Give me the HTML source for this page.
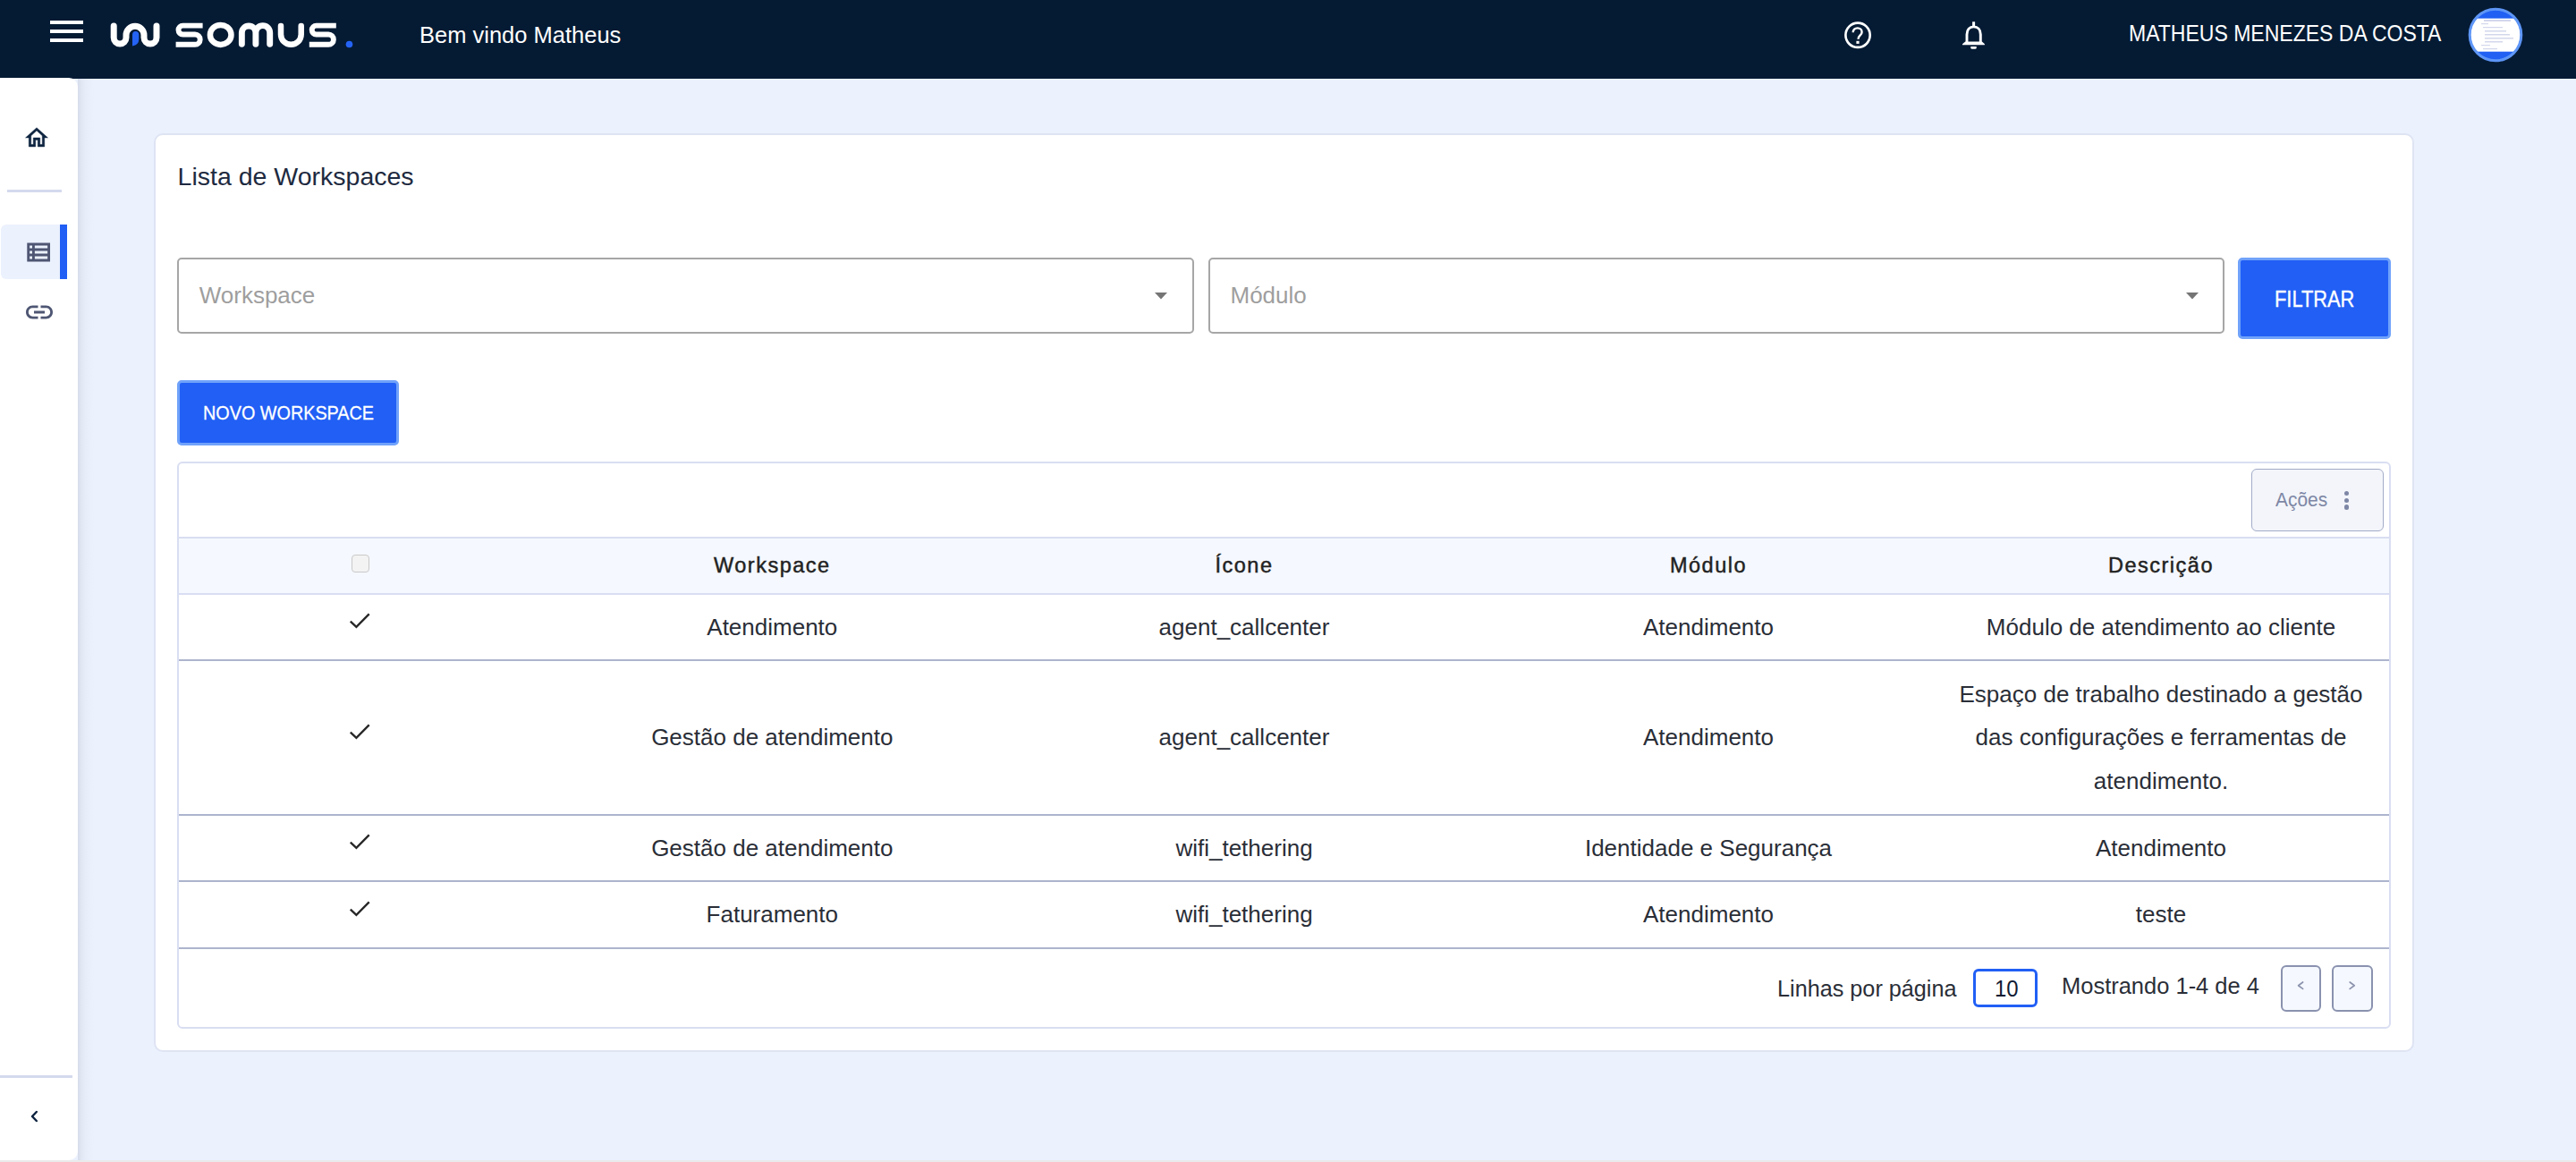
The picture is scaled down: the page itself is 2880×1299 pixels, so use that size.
<!DOCTYPE html>
<html><head><meta charset="utf-8"><title>Lista de Workspaces</title>
<style>
html,body{margin:0;padding:0;width:2880px;height:1299px;overflow:hidden;background:#ebf1fd;font-family:"Liberation Sans", sans-serif;}
</style></head><body>
<div style="position:absolute;left:0px;top:0px;width:2880px;height:88px;background:#051b34;"></div>
<div style="position:absolute;left:56px;top:23px;width:37px;height:4px;background:#fff;"></div>
<div style="position:absolute;left:56px;top:33px;width:37px;height:4px;background:#fff;"></div>
<div style="position:absolute;left:56px;top:43px;width:37px;height:4px;background:#fff;"></div>
<svg style="position:absolute;left:0;top:0" width="420" height="88" viewBox="0 0 420 88">
<g fill="none" stroke="#fff" stroke-width="7" stroke-linecap="round" stroke-linejoin="round">
<path d="M127.2 29 V42.1 A6.9 6.9 0 0 0 141 42.1 V39.3 A10 10 0 0 1 161 39.3 V42.1 A7 7 0 0 0 175 42.1 V29"/>
<path d="M270.35 49.25 V36.5 A7.78 7.78 0 0 1 285.9 36.5 V49.25 M285.9 36.5 A7.9 7.9 0 0 1 301.7 36.5 V49.25" stroke-width="6.9"/>
<path d="M314 28.9 V38.45 A11.35 11.35 0 0 0 336.7 38.45 V28.9" stroke-width="6.5"/>
</g>
<g fill="none" stroke="#fff" stroke-width="5.9" stroke-linecap="butt" stroke-linejoin="round">
<path d="M226.6 28.6 H204.45 A4.95 4.95 0 0 0 204.45 38.5 H218.05 A5.65 5.65 0 0 1 218.05 49.8 H196.6"/>
<path d="M375.8 28.6 H353.65 A4.95 4.95 0 0 0 353.65 38.5 H367.25 A5.65 5.65 0 0 1 367.25 49.8 H345.8"/>
</g>
<ellipse cx="246.7" cy="38.95" rx="11.78" ry="10.95" fill="none" stroke="#fff" stroke-width="6.5"/>
<path d="M148 51.5 L148 39 Q148 35 151.6 35 Q155.3 35 155.3 39 V44 Q155.3 50 148 51.5 Z" fill="#2563f5"/>
<circle cx="390.5" cy="49.5" r="3.8" fill="#2563f5"/>
</svg>
<div style="position:absolute;left:469px;top:26.81px;font-size:25.5px;line-height:25.5px;color:#fff;font-weight:400;white-space:nowrap;">Bem vindo Matheus</div>
<svg style="position:absolute;left:2050px;top:15px" width="180" height="50" viewBox="2050 15 180 50"><circle cx="2077.05" cy="39.3" r="13.65" fill="none" stroke="#fff" stroke-width="2.65"/><path d="M2071.7 36.3 C2071.7 33.3 2073.9 31.4 2076.7 31.4 C2079.6 31.4 2081.6 33.3 2081.6 35.9 C2081.6 39.2 2077.5 39.6 2077.5 43.7" fill="none" stroke="#fff" stroke-width="2.4"/><rect x="2075.4" y="45.8" width="3.2" height="3.1" fill="#fff"/><path d="M2199 47 V38.5 C2199 33 2202 29.9 2206.6 29.9 C2211.2 29.9 2214.3 33 2214.3 38.5 V47" fill="none" stroke="#fff" stroke-width="2.9"/><path d="M2194 50.2 H2218.9 V49.3 L2215.9 46.6 H2197.2 L2194 49.3 Z" fill="#fff"/><rect x="2205.1" y="24.3" width="3" height="5" fill="#fff"/><path d="M2203.3 51.9 H2209.7 V53.2 Q2209.7 54.7 2208.2 54.7 H2204.8 Q2203.3 54.7 2203.3 53.2 Z" fill="#fff"/></svg>
<div style="position:absolute;left:2380px;top:23.69px;font-size:26px;line-height:26px;color:#fff;font-weight:400;white-space:nowrap;transform:scaleX(0.885);transform-origin:0 0;">MATHEUS MENEZES DA COSTA</div>
<svg style="position:absolute;left:2758px;top:7.4px" width="64" height="64" viewBox="0 0 64 64">
<defs><clipPath id="av"><circle cx="32" cy="32" r="28"/></clipPath></defs>
<g clip-path="url(#av)">
<rect x="0" y="0" width="64" height="64" fill="#fff"/>
<rect x="0" y="0" width="64" height="13.6" fill="#2160f3"/>
<rect x="0" y="50.7" width="64" height="14" fill="#2160f3"/>
<g fill="#d3d7ec">
<rect x="19" y="15" width="30" height="2"/><rect x="16" y="19" width="8" height="1.2"/><rect x="18" y="23" width="22" height="1.2"/>
<rect x="20" y="27" width="24" height="1.5"/><rect x="20" y="31" width="28" height="1.5"/><rect x="20" y="35" width="32" height="1.5"/>
<rect x="20" y="39" width="20" height="1.5"/><rect x="16" y="43" width="10" height="1.2"/><rect x="18" y="47" width="16" height="1.2"/>
</g>
</g>
<circle cx="32" cy="32" r="28.8" fill="none" stroke="#5e96f7" stroke-width="3"/>
</svg>
<div style="position:absolute;left:87px;top:88px;width:18px;height:1209px;background:linear-gradient(90deg,#d6dcea 0px,#e1e7f3 4px,#e7edf9 9px,#ebf1fd 18px);"></div>
<div style="position:absolute;left:0px;top:87px;width:87px;height:1210px;background:#fff;border-radius:0 10px 10px 0;"></div>
<svg style="position:absolute;left:26.4px;top:139px" width="30" height="30" viewBox="0 0 24 24"><path fill="#0e2440" stroke="#0e2440" stroke-width="0.35" d="M12 5.69l5 4.5V18h-2v-6H9v6H7v-7.81l5-4.5M12 3L2 12h3v8h6v-6h2v6h6v-8h3L12 3z"/></svg>
<div style="position:absolute;left:8px;top:212px;width:61px;height:3px;background:#d4daee;"></div>
<div style="position:absolute;left:1px;top:251px;width:66px;height:61px;background:#ebf1fd;border-radius:6px 0 0 6px;"></div>
<div style="position:absolute;left:67px;top:251px;width:8px;height:61px;background:#215ff5;"></div>
<svg style="position:absolute;left:26.2px;top:263.6px" width="34.3" height="36" viewBox="0 0 24 24" preserveAspectRatio="none"><path fill="#4e5673" d="M3 5v14h18V5H3zm4 2v2H5V7h2zm-2 6v-2h2v2H5zm0 2h2v2H5v-2zm14 2H9v-2h10v2zm0-4H9v-2h10v2zm0-4H9V7h10v2z"/></svg>
<svg style="position:absolute;left:26.1px;top:330.8px" width="36" height="36" viewBox="0 0 24 24"><path fill="#4e5673" d="M3.9 12c0-1.71 1.39-3.1 3.1-3.1h4V7H7c-2.76 0-5 2.24-5 5s2.24 5 5 5h4v-1.9H7c-1.71 0-3.1-1.39-3.1-3.1zM8 13h8v-2H8v2zm9-6h-4v1.9h4c1.71 0 3.1 1.39 3.1 3.1s-1.39 3.1-3.1 3.1h-4V17h4c2.76 0 5-2.24 5-5s-2.24-5-5-5z"/></svg>
<div style="position:absolute;left:0px;top:1202px;width:81px;height:3px;background:#d4daee;"></div>
<svg style="position:absolute;left:0;top:1230px" width="80" height="40" viewBox="0 1230 80 40"><polyline points="40.8,1243 36,1248 40.8,1253" fill="none" stroke="#0e2440" stroke-width="2.5" stroke-linecap="round" stroke-linejoin="round"/></svg>
<div style="position:absolute;left:0px;top:1297px;width:2880px;height:2px;background:#eaeaea;"></div>
<div style="position:absolute;left:172px;top:149px;width:2527px;height:1027px;background:#fff;border:2px solid #dfe4f3;border-radius:10px;box-sizing:border-box;"></div>
<div style="position:absolute;left:198.6px;top:182.87px;font-size:28.5px;line-height:28.5px;color:#1e2a40;font-weight:400;white-space:nowrap;">Lista de Workspaces</div>
<div style="position:absolute;left:198px;top:288px;width:1137px;height:85px;border:2px solid #a6a6a6;border-radius:5px;box-sizing:border-box;background:#fff;"></div>
<div style="position:absolute;left:1351px;top:288px;width:1136px;height:85px;border:2px solid #a6a6a6;border-radius:5px;box-sizing:border-box;background:#fff;"></div>
<div style="position:absolute;left:222.7px;top:317.39px;font-size:26px;line-height:26px;color:#9e9e9e;font-weight:400;white-space:nowrap;">Workspace</div>
<div style="position:absolute;left:1375.5px;top:317.39px;font-size:26px;line-height:26px;color:#9e9e9e;font-weight:400;white-space:nowrap;">Módulo</div>
<svg style="position:absolute;left:1291px;top:327px" width="14" height="8" viewBox="0 0 14 8"><path d="M0 0H14L7 7.5Z" fill="#757575"/></svg>
<svg style="position:absolute;left:2444px;top:327px" width="14" height="8" viewBox="0 0 14 8"><path d="M0 0H14L7 7.5Z" fill="#757575"/></svg>
<div style="position:absolute;left:2502px;top:288px;width:171px;height:91px;background:#215ff5;border:3px solid #70a2fa;border-radius:5px;box-sizing:border-box;"></div>
<div style="position:absolute;left:2543.4px;top:321.29px;font-size:26px;line-height:26px;color:#fff;font-weight:400;white-space:nowrap;transform:scaleX(0.84);transform-origin:0 0;-webkit-text-stroke:0.35px #fff;">FILTRAR</div>
<div style="position:absolute;left:198px;top:425px;width:248px;height:73px;background:#215ff5;border:3px solid #70a2fa;border-radius:5px;box-sizing:border-box;"></div>
<div style="position:absolute;left:226.7px;top:450.88px;font-size:22px;line-height:22px;color:#fff;font-weight:400;white-space:nowrap;transform:scaleX(0.9);transform-origin:0 0;-webkit-text-stroke:0.3px #fff;">NOVO WORKSPACE</div>
<div style="position:absolute;left:198px;top:516px;width:2475px;height:634px;border:2px solid #d9def2;border-radius:6px;box-sizing:border-box;"></div>
<div style="position:absolute;left:2517px;top:524px;width:148px;height:70px;background:#f3f5fa;border:1.7px solid #a3acc8;border-radius:6px;box-sizing:border-box;"></div>
<div style="position:absolute;left:2544.2px;top:547.98px;font-size:22px;line-height:22px;color:#7e87a5;font-weight:400;white-space:nowrap;transform:scaleX(0.95);transform-origin:0 0;">Ações</div>
<div style="position:absolute;left:2621.2px;top:548.9px;width:5.200000000000273px;height:5.2000000000000455px;background:#7e87a5;border-radius:50%;"></div>
<div style="position:absolute;left:2621.2px;top:556.6px;width:5.200000000000273px;height:5.2000000000000455px;background:#7e87a5;border-radius:50%;"></div>
<div style="position:absolute;left:2621.2px;top:564.4px;width:5.200000000000273px;height:5.2000000000000455px;background:#7e87a5;border-radius:50%;"></div>
<div style="position:absolute;left:200px;top:600px;width:2471px;height:2px;background:#d9def2;"></div>
<div style="position:absolute;left:200px;top:602px;width:2471px;height:61px;background:#f5f8fe;"></div>
<div style="position:absolute;left:200px;top:663px;width:2471px;height:2px;background:#d9def2;"></div>
<div style="position:absolute;left:200px;top:737px;width:2471px;height:2px;background:#adb4cd;"></div>
<div style="position:absolute;left:200px;top:910px;width:2471px;height:2px;background:#adb4cd;"></div>
<div style="position:absolute;left:200px;top:984px;width:2471px;height:2px;background:#adb4cd;"></div>
<div style="position:absolute;left:200px;top:1059px;width:2471px;height:2px;background:#adb4cd;"></div>
<div style="position:absolute;left:393px;top:620px;width:20px;height:20px;background:#f3f3f3;border:1.5px solid #c9c9c9;border-radius:4px;box-sizing:border-box;"></div>
<div style="position:absolute;left:263.29999999999995px;width:1200px;text-align:center;top:621.41px;font-size:23.5px;line-height:23.5px;color:#222222;font-weight:400;white-space:nowrap;letter-spacing:1.5px;-webkit-text-stroke:0.45px #222;">Workspace</div>
<div style="position:absolute;left:791px;width:1200px;text-align:center;top:621.41px;font-size:23.5px;line-height:23.5px;color:#222222;font-weight:400;white-space:nowrap;letter-spacing:1.5px;-webkit-text-stroke:0.45px #222;">Ícone</div>
<div style="position:absolute;left:1310px;width:1200px;text-align:center;top:621.41px;font-size:23.5px;line-height:23.5px;color:#222222;font-weight:400;white-space:nowrap;letter-spacing:1.5px;-webkit-text-stroke:0.45px #222;">Módulo</div>
<div style="position:absolute;left:1816px;width:1200px;text-align:center;top:621.41px;font-size:23.5px;line-height:23.5px;color:#222222;font-weight:400;white-space:nowrap;letter-spacing:1.5px;-webkit-text-stroke:0.45px #222;">Descrição</div>
<svg style="position:absolute;left:380px;top:671.00px" width="40" height="40" viewBox="380 671.00 40 40"><polyline points="391.8,694.60 398.4,700.80 412.7,686.40" fill="none" stroke="#272727" stroke-width="2.35" stroke-linecap="butt" stroke-linejoin="miter"/></svg>
<div style="position:absolute;left:263.29999999999995px;width:1200px;text-align:center;top:687.99px;font-size:26px;line-height:26px;color:#2a2e37;font-weight:400;white-space:nowrap;">Atendimento</div>
<div style="position:absolute;left:791px;width:1200px;text-align:center;top:687.99px;font-size:26px;line-height:26px;color:#2a2e37;font-weight:400;white-space:nowrap;">agent_callcenter</div>
<div style="position:absolute;left:1310px;width:1200px;text-align:center;top:687.99px;font-size:26px;line-height:26px;color:#2a2e37;font-weight:400;white-space:nowrap;">Atendimento</div>
<div style="position:absolute;left:1816px;width:1200px;text-align:center;top:687.99px;font-size:26px;line-height:26px;color:#2a2e37;font-weight:400;white-space:nowrap;">Módulo de atendimento ao cliente</div>
<svg style="position:absolute;left:380px;top:794.50px" width="40" height="40" viewBox="380 794.50 40 40"><polyline points="391.8,818.10 398.4,824.30 412.7,809.90" fill="none" stroke="#272727" stroke-width="2.35" stroke-linecap="butt" stroke-linejoin="miter"/></svg>
<div style="position:absolute;left:263.29999999999995px;width:1200px;text-align:center;top:811.49px;font-size:26px;line-height:26px;color:#2a2e37;font-weight:400;white-space:nowrap;">Gestão de atendimento</div>
<div style="position:absolute;left:791px;width:1200px;text-align:center;top:811.49px;font-size:26px;line-height:26px;color:#2a2e37;font-weight:400;white-space:nowrap;">agent_callcenter</div>
<div style="position:absolute;left:1310px;width:1200px;text-align:center;top:811.49px;font-size:26px;line-height:26px;color:#2a2e37;font-weight:400;white-space:nowrap;">Atendimento</div>
<svg style="position:absolute;left:380px;top:918.00px" width="40" height="40" viewBox="380 918.00 40 40"><polyline points="391.8,941.60 398.4,947.80 412.7,933.40" fill="none" stroke="#272727" stroke-width="2.35" stroke-linecap="butt" stroke-linejoin="miter"/></svg>
<div style="position:absolute;left:263.29999999999995px;width:1200px;text-align:center;top:934.99px;font-size:26px;line-height:26px;color:#2a2e37;font-weight:400;white-space:nowrap;">Gestão de atendimento</div>
<div style="position:absolute;left:791px;width:1200px;text-align:center;top:934.99px;font-size:26px;line-height:26px;color:#2a2e37;font-weight:400;white-space:nowrap;">wifi_tethering</div>
<div style="position:absolute;left:1310px;width:1200px;text-align:center;top:934.99px;font-size:26px;line-height:26px;color:#2a2e37;font-weight:400;white-space:nowrap;">Identidade e Segurança</div>
<div style="position:absolute;left:1816px;width:1200px;text-align:center;top:934.99px;font-size:26px;line-height:26px;color:#2a2e37;font-weight:400;white-space:nowrap;">Atendimento</div>
<svg style="position:absolute;left:380px;top:992.50px" width="40" height="40" viewBox="380 992.50 40 40"><polyline points="391.8,1016.10 398.4,1022.30 412.7,1007.90" fill="none" stroke="#272727" stroke-width="2.35" stroke-linecap="butt" stroke-linejoin="miter"/></svg>
<div style="position:absolute;left:263.29999999999995px;width:1200px;text-align:center;top:1009.49px;font-size:26px;line-height:26px;color:#2a2e37;font-weight:400;white-space:nowrap;">Faturamento</div>
<div style="position:absolute;left:791px;width:1200px;text-align:center;top:1009.49px;font-size:26px;line-height:26px;color:#2a2e37;font-weight:400;white-space:nowrap;">wifi_tethering</div>
<div style="position:absolute;left:1310px;width:1200px;text-align:center;top:1009.49px;font-size:26px;line-height:26px;color:#2a2e37;font-weight:400;white-space:nowrap;">Atendimento</div>
<div style="position:absolute;left:1816px;width:1200px;text-align:center;top:1009.49px;font-size:26px;line-height:26px;color:#2a2e37;font-weight:400;white-space:nowrap;">teste</div>
<div style="position:absolute;left:1816px;width:1200px;text-align:center;top:762.69px;font-size:26px;line-height:26px;color:#2a2e37;font-weight:400;white-space:nowrap;">Espaço de trabalho destinado a gestão</div>
<div style="position:absolute;left:1816px;width:1200px;text-align:center;top:811.19px;font-size:26px;line-height:26px;color:#2a2e37;font-weight:400;white-space:nowrap;">das configurações e ferramentas de</div>
<div style="position:absolute;left:1816px;width:1200px;text-align:center;top:859.69px;font-size:26px;line-height:26px;color:#2a2e37;font-weight:400;white-space:nowrap;">atendimento.</div>
<div style="position:absolute;left:1987.4px;top:1092.09px;font-size:26px;line-height:26px;color:#2a2e37;font-weight:400;white-space:nowrap;transform:scaleX(0.97);transform-origin:0 0;">Linhas por página</div>
<div style="position:absolute;left:2206px;top:1083px;width:72px;height:43px;border:3px solid #215ff5;border-radius:6px;box-sizing:border-box;"></div>
<div style="position:absolute;left:2230.2px;top:1092.09px;font-size:26px;line-height:26px;color:#101a33;font-weight:400;white-space:nowrap;transform:scaleX(0.92);transform-origin:0 0;">10</div>
<div style="position:absolute;left:2304.7px;top:1088.59px;font-size:26px;line-height:26px;color:#2a2e37;font-weight:400;white-space:nowrap;transform:scaleX(0.98);transform-origin:0 0;">Mostrando 1-4 de 4</div>
<div style="position:absolute;left:2550px;top:1079px;width:45px;height:52px;background:#f5f8fe;border:2px solid #8a92af;border-radius:6px;box-sizing:border-box;"></div>
<div style="position:absolute;left:2607px;top:1079px;width:46px;height:52px;background:#f5f8fe;border:2px solid #8a92af;border-radius:6px;box-sizing:border-box;"></div>
<svg style="position:absolute;left:2550px;top:1079px" width="104" height="52" viewBox="2550 1079 104 52"><g fill="none" stroke="#8b93ad" stroke-width="1.7" stroke-linecap="round" stroke-linejoin="round"><polyline points="2574.6,1098 2569.6,1101.7 2574.6,1105.4"/><polyline points="2627.2,1098 2632.2,1101.7 2627.2,1105.4"/></g></svg>
</body></html>
